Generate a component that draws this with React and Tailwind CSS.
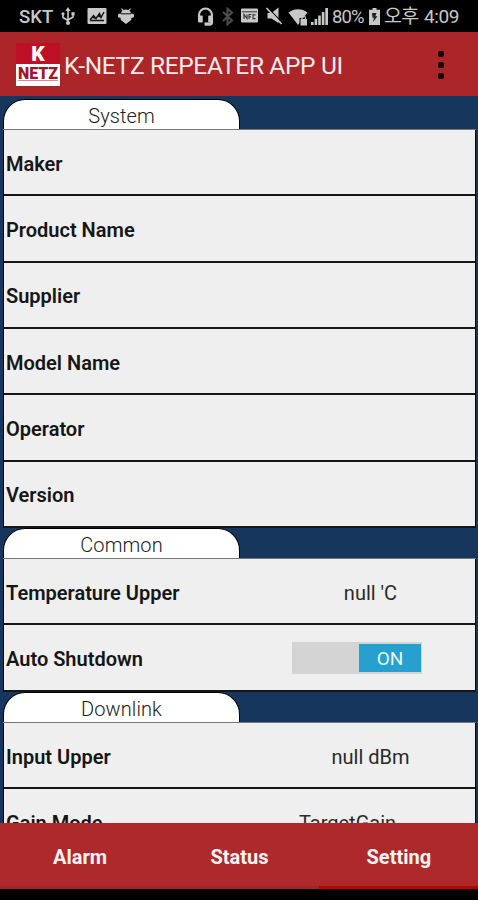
import React, { useState } from 'react';

const sections = [
  {
    title: 'System',
    rows: [
      { label: 'Maker' },
      { label: 'Product Name' },
      { label: 'Supplier' },
      { label: 'Model Name' },
      { label: 'Operator' },
      { label: 'Version' },
    ],
  },
  {
    title: 'Common',
    rows: [
      { label: 'Temperature Upper', value: "null 'C" },
      { label: 'Auto Shutdown', toggle: true },
    ],
  },
  {
    title: 'Downlink',
    rows: [
      { label: 'Input Upper', value: 'null dBm' },
      { label: 'Gain Mode', value: 'TargetGain', wide: true },
    ],
  },
];

const tabs = ['Alarm', 'Status', 'Setting'];

const StatusBar = () => (
  <div className="relative h-8 shrink-0 bg-black text-[#c8c8c8] font-['Roboto','Noto_Sans_CJK_KR',sans-serif]">
    <span className="absolute left-[19px] top-[6px] text-[18.5px] leading-[22px] font-medium">SKT</span>

    {/* Notification icons */}
    <svg className="absolute left-[61px] top-[7px] w-[14px] h-[19px]" viewBox="0 0 14 19" fill="none" stroke="currentColor" strokeWidth="1.6">
      <path d="M7 3v13M2 7v3.5l5 3M12 7v3l-5 3" />
      <path d="M7 0l2.6 4H4.4z" fill="currentColor" stroke="none" />
      <circle cx="7" cy="16" r="2.1" fill="currentColor" stroke="none" />
      <circle cx="2" cy="6.8" r="1.6" fill="currentColor" stroke="none" />
      <path d="M10.4 5.2h3.2v3.2h-3.2z" fill="currentColor" stroke="none" />
    </svg>
    <svg className="absolute left-[87px] top-[8px] w-5 h-4" viewBox="0 0 20 16">
      <rect x="0.5" width="19" height="16" rx="1" fill="currentColor" />
      <path d="M3 12l3.5-4.5 2.5 3 3.5-5 1.5 4L17 4M3 12.5h14" fill="none" stroke="#111" strokeWidth="1.4" />
      <path d="M5 10l1.5-3 2.5 4zM11 9l1.5-4 2 4.5z" fill="#111" />
    </svg>
    <svg className="absolute left-[118px] top-[8px] w-4 h-4" viewBox="0 0 16 16" fill="currentColor">
      <path d="M3.8.3l1.9 1.7a6 6 0 014.6 0L12.200.3l.7.7-1.5 1.7c1 .8 1.5 1.7 1.6 2.800H3c.1-1.100.6-2 1.600-2.800L3.100 1z" />
      <path d="M2.600 6.500h10.800V11c0 1-.6 1.500-1.500 2L8 16l-3.900-3c-.9-.5-1.500-1-1.500-2z" />
      <path d="M0 7.200c0-1 .6-1.500 1.500-1.500h13c.9 0 1.500.5 1.500 1.500v1c0 1-1 1.500-2 1.500H2C1 9.700 0 9.200 0 8.200z" />
      <path d="M3 5.900h10" stroke="#111" strokeWidth=".8" />
    </svg>

    {/* System icons */}
    <svg className="absolute left-[197px] top-[7px] w-[18px] h-[19px]" viewBox="0 0 18 19">
      <path d="M2 12V8a6.500 6.500 0 0113 0v7.500a2 2 0 01-2 2H8" fill="none" stroke="currentColor" strokeWidth="2.100" />
      <rect x="1" y="8.500" width="4.800" height="7" rx="1" fill="currentColor" />
      <rect x="11.200" y="8.500" width="4.800" height="7" rx="1" fill="currentColor" />
      <rect x="7.500" y="15.400" width="6.500" height="3" fill="currentColor" />
    </svg>
    <svg className="absolute left-[221px] top-[7px] w-[13px] h-[19px] text-[#4c4c4c]" viewBox="0 0 13 19" fill="none" stroke="currentColor" strokeWidth="2.100">
      <path d="M2 5l9 8.500-4.500 3.700V1.800L11 5.500 2 14" />
    </svg>
    <svg className="absolute left-[241px] top-[8px] w-[17px] h-[15px]" viewBox="0 0 17 14">
      <rect width="17" height="14" rx="1" fill="currentColor" />
      <path d="M1 3.300h15" stroke="#333" strokeWidth="1" />
      <path d="M3 10.500V6l3 4V6M8 10.500V6h2.500M8 8.200h2M14.500 6.400H12v3.700h2.500" fill="none" stroke="#333" strokeWidth="1.100" />
    </svg>
    <svg className="absolute left-[265px] top-[7px] w-[18px] h-[18px]" viewBox="0 0 18 18">
      <path d="M2.500 6h4L13.500.500v15.500l-7-4.500h-4z" fill="currentColor" />
      <path d="M3 .8l14.500 15" stroke="#000" strokeWidth="1.200" />
      <path d="M1.500 1l15 16" stroke="currentColor" strokeWidth="1.700" />
    </svg>
    <svg className="absolute left-[288px] top-[8px] w-5 h-[18px]" viewBox="0 0 20 18">
      <path d="M.5 4.500C6 0 14 0 19.500 4.500L10 17z" fill="currentColor" />
      <path d="M11.500 10h8.500v8h-8.500z" fill="#000" />
      <path d="M12.500 11h6.500v6.500h-6.500z" fill="currentColor" />
      <path d="M14 11V9.700a1.700 1.700 0 013.400 0V11" fill="none" stroke="currentColor" strokeWidth="1.200" />
    </svg>
    <svg className="absolute left-[311px] top-[8px] w-[17px] h-[17px]" viewBox="0 0 17 17" fill="currentColor">
      <path d="M0 14h2.600v3H0zM3.600 11h2.600v6H3.600zM7.200 7.500h2.600V17H7.200zM10.800 4h2.600v13h-2.600zM14.300 0H17v17h-2.700z" />
    </svg>
    <span className="absolute left-[332px] top-[6px] text-[18.5px] leading-[22px] tracking-[-0.9px]">80%</span>
    <svg className="absolute left-[369px] top-[8px] w-[11px] h-[17px]" viewBox="0 0 11 17">
      <path d="M3.500 0h4v1.800H11V17H0V1.800h3.500z" fill="currentColor" />
      <path d="M3 5h4.500L6.300 8.200H8.500L4 14l1-4.200H3.500z" fill="#222" />
    </svg>
    <span className="absolute left-[384px] top-[6px] text-[19.5px] leading-[22px] tracking-[-0.6px] whitespace-nowrap">오후</span>
    <span className="absolute left-[424px] top-[6px] text-[19px] leading-[22px] tracking-[-0.4px]">4:09</span>
  </div>
);

const Logo = () => (
  <div className="w-11 h-[43px] flex flex-col bg-[#bf0f25] text-center">
    <span className="h-[21px] text-white text-[21px] leading-[22px] font-black">K</span>
    <div className="h-[22px] bg-white pt-[2px]">
      <span className="flex justify-center h-[14px] text-[16px] leading-[15px] font-black text-[#a3142b]">NETZ</span>
      <div className="mx-[2px] h-px bg-[#d98a94]"></div>
    </div>
  </div>
);

const Header = () => (
  <div className="h-16 shrink-0 flex items-center bg-[#ab2529] pl-4 pr-[34px]">
    <Logo />
    <h1 className="ml-[4px] pt-[4px] text-[24.5px] font-normal text-[#fdebea] tracking-[-0.35px] whitespace-nowrap">K-NETZ REPEATER APP UI</h1>
    <button className="ml-auto mt-[2px] flex flex-col gap-[5px]">
      <span className="w-[6px] h-[6px] rounded-[2px] bg-[#140405]"></span>
      <span className="w-[6px] h-[6px] rounded-[2px] bg-[#140405]"></span>
      <span className="w-[6px] h-[6px] rounded-[2px] bg-[#140405]"></span>
    </button>
  </div>
);

const Toggle = () => {
  const [on, setOn] = useState(true);
  return (
    <button
      onClick={() => setOn(!on)}
      className={`w-[130px] h-8 p-px flex items-center bg-[#d4d4d4] ${on ? 'justify-end' : 'justify-start'}`}
    >
      <span className="w-[62px] h-[28px] pt-[3px] flex items-center justify-center bg-[#26a1cf] text-[#e6f6fc] text-[19px]">
        {on ? 'ON' : 'OFF'}
      </span>
    </button>
  );
};

// The value column is centred differently per control type
const valuePadding = (row) => {
  if (row.toggle) return 'pr-0';
  return row.wide ? 'pt-[3px] pr-[19px]' : 'pt-[3px] pl-[27px]';
};

const Section = ({ title, rows }) => (
  <section>
    <div className="h-[31.2px]">
      <h2 className="-ml-px w-[237px] h-full rounded-t-[22px] border-t border-x border-black bg-white flex items-center justify-center pt-[2px] text-[20px] font-light text-[#222] tracking-[0.1px]">
        {title}
      </h2>
    </div>
    <div className="-mx-px border-x border-black bg-[#efefef] shadow-[0_-1px_0_#777]">
      {rows.map((row) => (
        <div key={row.label} className="h-[66.3px] flex items-center border-b-2 border-[#161616]">
          <span className="w-[235px] shrink-0 pl-[2px] pt-[3px] text-[20px] font-semibold text-[#161616] whitespace-nowrap">{row.label}</span>
          <div className={`flex-1 flex justify-center text-[20px] font-normal text-[#2a2a2a] ${valuePadding(row)}`}>
            {row.toggle ? <Toggle /> : row.value}
          </div>
        </div>
      ))}
    </div>
  </section>
);

const App = () => {
  const [active, setActive] = useState('Setting');

  return (
    <div className="w-[478px] h-[900px] flex flex-col overflow-hidden bg-black font-['Roboto',sans-serif]">
      <StatusBar />
      <Header />

      <main className="flex-1 min-h-0 overflow-hidden bg-[#17365d] pt-[3px] pl-1 pr-[3px]">
        {sections.map((section) => (
          <Section key={section.title} {...section} />
        ))}
      </main>

      {/* Bottom tabs */}
      <nav className="h-[66px] shrink-0 grid grid-cols-3 bg-[#ad292b]">
        {tabs.map((tab) => (
          <button
            key={tab}
            onClick={() => setActive(tab)}
            className={`pt-[4px] pl-px border-b-[3px] text-[20px] font-bold text-[#fff3f2] ${
              active === tab ? 'border-[#c00000]' : 'border-[#a52226]'
            }`}
          >
            {tab}
          </button>
        ))}
      </nav>
      <div className="h-[11px] shrink-0 bg-black"></div>
    </div>
  );
};

export default App;
